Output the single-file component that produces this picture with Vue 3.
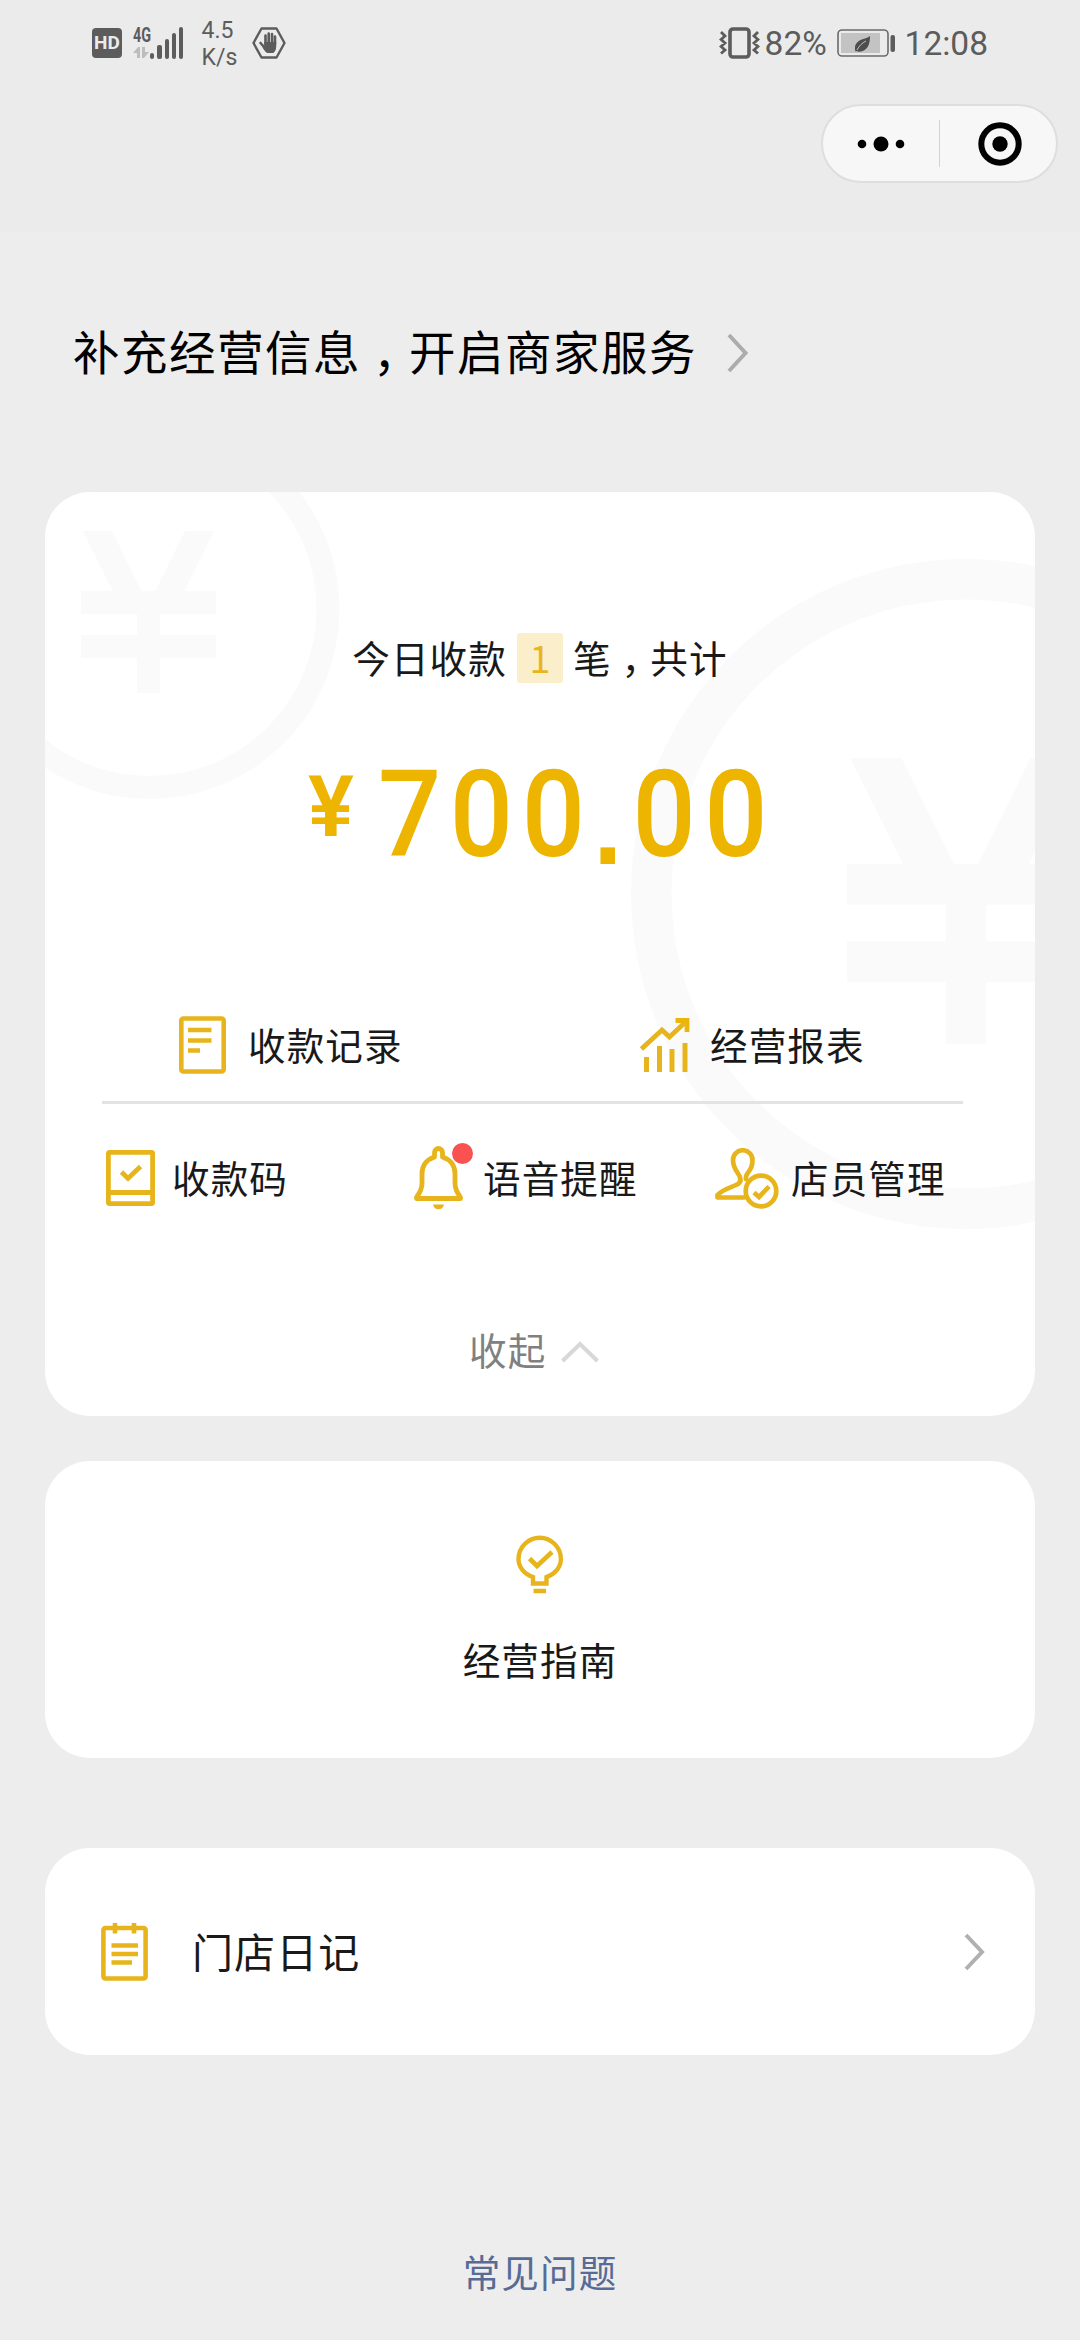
<script setup>
import { ref } from 'vue'

const count = ref(1)
const signalBars = [6, 14, 20, 26, 32]
</script>

<template>
  <div class="page">
    <header class="header">
      <div class="status">
        <span class="hd">HD</span>
        <span class="mobile">
          <span class="net">
            <b>4G</b>
            <svg width="16" height="12" viewBox="0 0 16 12" fill="#bdbdbd">
              <path d="M0 6L5 0h2v11H4V6zM9 0h3v5h4l-5 6H9z" />
            </svg>
          </span>
          <span class="bars">
            <i v-for="h in signalBars" :key="h" :style="{ height: h + 'px' }"></i>
          </span>
        </span>
        <span class="speed">4.5<br />K/s</span>
        <svg class="hand" width="34" height="32" viewBox="0 0 34 32">
          <path d="M9.500 1.500h15L32.500 16l-8 14.500h-15L1.500 16z" fill="none" stroke="#5c5c5c" stroke-width="2.400" stroke-linejoin="round" />
          <g fill="none" stroke="#5c5c5c" stroke-width="2.600" stroke-linecap="round">
            <path d="M13.500 17V8.500M16.700 16V6.500M20 16V7M23 17v-7.500M8.500 16l4.500 5" />
          </g>
          <path d="M12.200 15h12v5c0 3-2 5.500-3 6h-6c-2-1-4-4-5-6.500l2 .5z" fill="#5c5c5c" />
        </svg>
        <span class="grow"></span>
        <svg class="vibrate" width="41" height="32" viewBox="0 0 41 32" fill="none" stroke="#5c5c5c">
          <rect x="11" y="2" width="19" height="28" rx="3" stroke-width="3.600" />
          <path d="M2 5l4 4-4 3.500 4 3.500-4 3.500 4 3.500-4 3.500M39 5l-4 4 4 3.500-4 3.500 4 3.500-4 3.500 4 3.500" stroke-width="2.800" />
        </svg>
        <span class="pct">82%</span>
        <svg class="battery" width="59" height="28" viewBox="0 0 59 28">
          <rect x="1" y="1" width="50" height="26" rx="4" fill="none" stroke="#6b6b6b" stroke-width="1.600" />
          <rect x="4" y="4" width="39" height="20" fill="#c3c3c3" />
          <rect x="53.500" y="6" width="4.500" height="17" rx="2" fill="#5c5c5c" />
          <path d="M33 7c0 8-2 14-9 15.500-2 .4-3.500 0-4.500-.5l-1 .5c-1.500-5 0-9 5-11.500C27 9.500 31 9 33 7z" fill="#4d4d4d" />
          <path d="M20 21c2-4 5-7 9-9" fill="none" stroke="#c3c3c3" stroke-width="1" />
        </svg>
        <span class="time">12:08</span>
      </div>
      <div class="capsule">
        <svg width="116" height="48" viewBox="0 0 116 48">
          <circle cx="39" cy="24" r="4.300" />
          <circle cx="58" cy="24" r="7.500" />
          <circle cx="77" cy="24" r="4.300" />
        </svg>
        <i class="split"></i>
        <svg width="116" height="48" viewBox="0 0 116 48">
          <circle cx="60" cy="24" r="18.700" fill="none" stroke="#000" stroke-width="6" />
          <circle cx="60" cy="24" r="7.700" />
        </svg>
      </div>
    </header>

    <div class="title">
      <span>补充经营信息<span class="comma">，</span>开启商家服务</span>
      <svg width="22" height="40" viewBox="0 0 22 40"><path d="M2 2l16.500 18L2 38" fill="none" stroke="#acacac" stroke-width="4" /></svg>
    </div>

    <section class="card main">
      <svg class="mark" width="990" height="924" viewBox="0 0 990 924" fill="none" stroke="#fafafa">
        <defs>
          <clipPath id="coinClip"><path d="M-195 -77h390v300h-390z" /></clipPath>
        </defs>
        <g transform="translate(104.500 117)" stroke-width="23">
          <circle r="178.500" />
          <g transform="translate(-1 -1)"><g clip-path="url(#coinClip)">
            <path d="M-67.500 -5.500h135M-67.500 38.500h135M0 -17V85" />
            <path d="M-57.500 -90L-15.500 -5.500M57.500 -90L15.500 -5.500" stroke-width="26" />
          </g></g>
        </g>
        <g transform="translate(921 402) scale(1.763)" stroke-width="23">
          <circle r="178.500" />
          <g clip-path="url(#coinClip)">
            <path d="M-67.500 -5.500h135M-67.500 38.500h135M0 -17V85" />
            <path d="M-57.500 -90L-15.500 -5.500M57.500 -90L15.500 -5.500" stroke-width="26" />
          </g>
        </g>
      </svg>

      <div class="summary">
        <span>今日收款</span>
        <span class="count">{{ count }}</span>
        <span>笔<span class="comma">，</span>共计</span>
      </div>
      <div class="amount"><span class="yen">¥</span><span class="num">700<span class="dot">.</span>00</span></div>

      <div class="row two">
        <div class="item">
          <svg width="47" height="58" viewBox="0 0 47 58" fill="none" stroke="#e7b51b" stroke-width="4.600">
            <rect x="2.300" y="2.500" width="42.400" height="53" rx="2" />
            <path d="M9 14h23.500M9 24.500h23.500M9 34.500h12" />
          </svg>
          <span>收款记录</span>
        </div>
        <div class="item">
          <svg width="50" height="56" viewBox="0 0 50 56" fill="none" stroke="#e7b51b" stroke-width="4.800">
            <path d="M1.500 32L22 13l7.500 7L46 4.500" />
            <path d="M35.500 3.500H47V15" stroke="#ecb50c" />
            <path d="M6.500 40v15M19.500 29v26M32 32v23M45 26v29" stroke-width="5" />
          </svg>
          <span>经营报表</span>
        </div>
      </div>
      <div class="line"></div>
      <div class="row three">
        <div class="item">
          <svg width="49" height="56" viewBox="0 0 49 56" fill="none" stroke="#e7b51b" stroke-width="4.800">
            <rect x="2.400" y="2.400" width="44.200" height="51.200" rx="1" />
            <path d="M2 42.500h45M15.500 22l6.500 6.500L34.500 16.500" />
          </svg>
          <span>收款码</span>
        </div>
        <div class="item">
          <span class="bell">
            <svg width="49" height="64" viewBox="0 0 49 64" fill="none" stroke="#e7b51b" stroke-width="4.800" stroke-linejoin="round">
              <path d="M2.500 51.500C6 46 8 43 8 37V28C8 19 13 13.500 20.500 11V6.500a4 4 0 0 1 8 0V11C36 13.500 41 19 41 28v9c0 6 2 9 5.500 14.500v1h-44z" />
              <path d="M19 58.500h11c-.8 3.400-2.800 4.800-5.500 4.800S19.800 62 19 58.500z" fill="#e7b51b" stroke="none" />
            </svg>
            <i></i>
          </span>
          <span>语音提醒</span>
        </div>
        <div class="item">
          <svg width="64" height="61" viewBox="0 0 64 61" fill="none" stroke="#e7b51b" stroke-width="4.700" stroke-linecap="round" stroke-linejoin="round">
            <path d="M29 49.500H2.500V47C8 41 18 39 23 36c4-3 2.500-7 0-10.500-3.500-5-5-8-5-13.500a9.700 9.700 0 0 1 19.500 0c0 6-1.500 8.500-5 13.500-1.500 2-1.800 4-1.500 5.500" />
            <circle cx="46" cy="43" r="15.300" />
            <path d="M39 44.500l5 4.500 10-10.500" stroke-linecap="butt" stroke-linejoin="miter" />
          </svg>
          <span>店员管理</span>
        </div>
      </div>

      <div class="fold">
        <span>收起</span>
        <svg width="38" height="22" viewBox="0 0 38 22"><path d="M1.500 20L19 3l17.500 17" fill="none" stroke="#d8d8d8" stroke-width="4" /></svg>
      </div>
    </section>

    <section class="card guide">
      <svg width="48" height="60" viewBox="0 0 48 60" fill="none" stroke="#e7b51b" stroke-width="4.400">
        <path d="M17 48.500v-6.500C8 39 2.500 32 2.500 24a21.200 21.200 0 0 1 42.400 0c0 8-5.500 15-14.400 18v6.500z" />
        <path d="M17.500 56h12.500M13.500 23.500l7.500 7.500L36 17" stroke-width="4.600" />
      </svg>
      <span>经营指南</span>
    </section>

    <section class="card diary">
      <svg width="47" height="60" viewBox="0 0 47 60" fill="none" stroke="#e7b51b" stroke-width="4.600">
        <rect x="2.400" y="6" width="42.200" height="50.500" rx="2" />
        <path d="M14 1v10.500M33 1v10.500M10.500 23.500h26.500M10.500 32h26.500M10.500 40.500h20.500" />
      </svg>
      <span class="name">门店日记</span>
      <svg width="22" height="40" viewBox="0 0 22 40"><path d="M3 3l16 17L3 37" fill="none" stroke="#b0b0b0" stroke-width="4" /></svg>
    </section>

    <a class="faq">常见问题</a>
  </div>
</template>

<style>
body {
  background: #ededed;
}
</style>

<style scoped>
.page {
  width: 1080px;
  height: 2340px;
  overflow: hidden;
  background: #ededed;
  color: #191919;
  font-family: 'Noto Sans CJK SC', sans-serif;
  font-size: 37.600px;
  letter-spacing: 1.100px;
  display: flex;
  flex-direction: column;
}
svg {
  display: block;
  flex: none;
}
.header {
  height: 232px;
  background: #ebebeb;
  flex: none;
}
.status {
  height: 86px;
  padding: 0 92px;
  display: flex;
  align-items: center;
  color: #5c5c5c;
  font-family: Roboto, sans-serif;
  letter-spacing: 0;
}
.hd {
  width: 30px;
  height: 30px;
  border-radius: 4px;
  background: #5c5c5c;
  color: #ebebeb;
  font: 700 19px/30px Roboto, sans-serif;
  text-align: center;
}
.mobile {
  display: flex;
  align-items: flex-end;
  height: 32px;
  margin: 0 0 0 11px;
}
.net {
  width: 17px;
  height: 32px;
  display: flex;
  flex-direction: column;
  justify-content: space-between;
}
.net b {
  font-size: 20px;
  line-height: 16px;
  transform: scaleX(0.72);
  transform-origin: left;
}
.bars {
  display: flex;
  align-items: flex-end;
  gap: 3px;
}
.bars i {
  width: 4.300px;
  border-radius: 2px;
  background: #5c5c5c;
}
.speed {
  margin-left: 18px;
  width: 51px;
  padding-top: 2px;
  font-size: 23px;
  line-height: 27px;
}
.grow {
  flex: 1;
}
.pct {
  font-size: 33.500px;
  margin-left: 5px;
  width: 72px;
}
.battery {
  margin-right: 9px;
}
.time {
  font-size: 33.500px;
}
.capsule {
  box-sizing: border-box;
  width: 237px;
  height: 79px;
  margin: 18px 0 0 821px;
  border: 2px solid #dedede;
  border-radius: 40px;
  background: #f7f7f7;
  display: flex;
  align-items: center;
}
.split {
  width: 1px;
  height: 47px;
  background: #d3d3d3;
}
.comma {
  font-family: 'Noto Sans CJK TC', sans-serif;
  line-height: 0;
  vertical-align: -0.320em;
}
.title {
  height: 260px;
  padding: 0 0 24px 73px;
  box-sizing: border-box;
  display: flex;
  align-items: center;
  gap: 30px;
  flex: none;
  color: #000;
  font-size: 46.500px;
  letter-spacing: 1.500px;
  line-height: 60px;
}
.title svg {
  margin-top: 6px;
}
.card {
  width: 990px;
  margin-left: 45px;
  box-sizing: border-box;
  border-radius: 45px;
  background: #fff;
  overflow: hidden;
  flex: none;
}
.main {
  height: 924px;
  position: relative;
}
.mark {
  position: absolute;
  left: 0;
  top: 0;
}
.main > div {
  position: relative;
}
.summary {
  margin-top: 141px;
  height: 50px;
  line-height: 47px;
  display: flex;
  justify-content: center;
  gap: 10px;
}
.count {
  width: 46px;
  border-radius: 3px;
  background: #fbeecb;
  color: #e9b51d;
  text-align: center;
  letter-spacing: 0;
}
.amount {
  height: 130px;
  margin: 67px 0 0 263px;
  display: flex;
  align-items: flex-start;
  color: #edb500;
  font-family: Roboto, sans-serif;
  font-weight: 500;
  line-height: 130px;
}
.yen {
  width: 70px;
  font-size: 86px;
  font-weight: 600;
  line-height: 113px;
}
.num {
  font-size: 121px;
  letter-spacing: 9.300px;
  transform: scaleX(0.920);
  transform-origin: left;
}
.dot {
  font-family: 'Liberation Sans', sans-serif;
  font-weight: 700;
  font-size: 112px;
  line-height: 0;
  vertical-align: -8px;
  margin-right: 2px;
}
.row {
  display: flex;
  align-items: center;
}
.item {
  display: flex;
  align-items: center;
}
.item > span:last-child {
  line-height: 54px;
  padding-bottom: 3px;
}
.two {
  height: 64px;
  margin: 133px 0 0 134px;
}
.two .item:first-child {
  width: 461px;
  gap: 22px;
}
.two .item:last-child {
  gap: 20px;
}
.line {
  height: 3px;
  width: 861px;
  margin: 24px 0 0 57px;
  background: #e3e3e3;
}
.three {
  height: 64px;
  margin: 42px 0 0 61px;
}
.three .item:first-child {
  width: 308px;
  gap: 17px;
}
.three .item:nth-child(2) {
  width: 301px;
  gap: 20px;
}
.three .item:last-child {
  gap: 12px;
}
.bell {
  position: relative;
}
.bell i {
  position: absolute;
  left: 38px;
  top: -3px;
  width: 21px;
  height: 21px;
  border-radius: 50%;
  background: #fa5151;
}
.fold {
  height: 60px;
  margin: 109px 0 0 424px;
  line-height: 60px;
  display: flex;
  align-items: center;
  gap: 15px;
  color: #808080;
}
.fold svg {
  margin-top: 5px;
}
.guide {
  height: 297px;
  margin-top: 45px;
  padding-top: 74px;
  display: flex;
  flex-direction: column;
  align-items: center;
  gap: 34px;
  line-height: 60px;
}
.diary {
  height: 207px;
  margin-top: 90px;
  padding: 0 50px 0 56px;
  display: flex;
  align-items: center;
  font-size: 41px;
}
.name {
  flex: 1;
  margin-left: 44px;
  padding-bottom: 3px;
}
.faq {
  margin-top: 186px;
  text-align: center;
  line-height: 60px;
  color: #576b95;
}
</style>
